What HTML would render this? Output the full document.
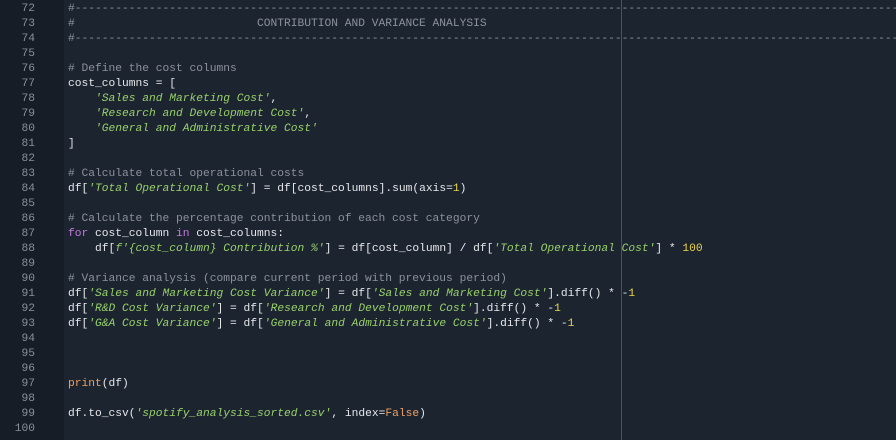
<!DOCTYPE html>
<html><head><meta charset="utf-8"><style>
html,body{margin:0;padding:0;width:896px;height:440px;overflow:hidden;background:#1c2430;}
.g{position:absolute;left:0;top:0;width:64px;height:440px;background:#161d27;}
.ruler{position:absolute;left:621px;top:0;width:1px;height:440px;background:#4a525e;}
.nums,.code{position:absolute;top:2px;font-family:"Liberation Mono",monospace;font-size:11.25px;line-height:15px;white-space:pre;}
.nums{left:0;width:35px;text-align:right;color:#8a9099;}
.code{left:68px;color:#e6e8eb;}
.c{color:#8b929b;}
.s{color:#98d06a;font-style:italic;}
.k{color:#c678dd;}
.n{color:#e8d44d;}
.o{color:#f0a060;}
</style></head><body>
<div class="g"></div>
<div class="nums">72
73
74
75
76
77
78
79
80
81
82
83
84
85
86
87
88
89
90
91
92
93
94
95
96
97
98
99
100</div>
<div class="code"><span class="c">#--------------------------------------------------------------------------------------------------------------------------------</span>
<span class="c">#                           CONTRIBUTION AND VARIANCE ANALYSIS</span>
<span class="c">#--------------------------------------------------------------------------------------------------------------------------------</span>

<span class="c"># Define the cost columns</span>
cost_columns = [
    <span class="s">'Sales and Marketing Cost'</span>,
    <span class="s">'Research and Development Cost'</span>,
    <span class="s">'General and Administrative Cost'</span>
]

<span class="c"># Calculate total operational costs</span>
df[<span class="s">'Total Operational Cost'</span>] = df[cost_columns].sum(axis=<span class="n">1</span>)

<span class="c"># Calculate the percentage contribution of each cost category</span>
<span class="k">for</span> cost_column <span class="k">in</span> cost_columns:
    df[<span class="s">f'{cost_column} Contribution %'</span>] = df[cost_column] / df[<span class="s">'Total Operational Cost'</span>] * <span class="n">100</span>

<span class="c"># Variance analysis (compare current period with previous period)</span>
df[<span class="s">'Sales and Marketing Cost Variance'</span>] = df[<span class="s">'Sales and Marketing Cost'</span>].diff() * -<span class="n">1</span>
df[<span class="s">'R&amp;D Cost Variance'</span>] = df[<span class="s">'Research and Development Cost'</span>].diff() * -<span class="n">1</span>
df[<span class="s">'G&amp;A Cost Variance'</span>] = df[<span class="s">'General and Administrative Cost'</span>].diff() * -<span class="n">1</span>



<span class="o">print</span>(df)

df.to_csv(<span class="s">'spotify_analysis_sorted.csv'</span>, index=<span class="o">False</span>)
</div>
<div class="ruler"></div>
</body></html>
